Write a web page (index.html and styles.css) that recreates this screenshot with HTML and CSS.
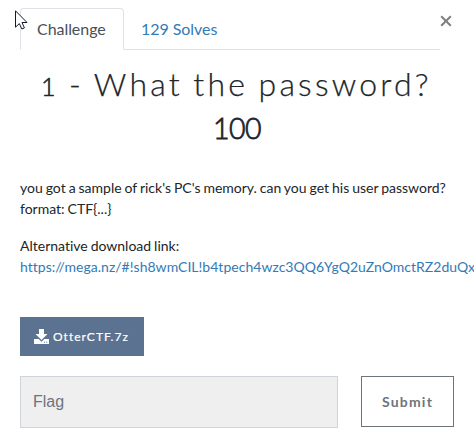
FILE: index.html
```html
<!DOCTYPE html>
<html lang="en">
<head>
<meta charset="utf-8">
<title>Challenge</title>
<link rel="stylesheet" href="styles.css">
</head>
<body>
<main class="modal">
  <button class="close" aria-label="Close"><svg width="12" height="12" viewBox="0 0 12 12"><path d="M1.2 1.2 10.8 10.8M10.8 1.2 1.2 10.8"/></svg></button>
  <nav class="tabs">
    <a class="tab active">Challenge</a>
    <a class="tab">129 Solves</a>
  </nav>
  <h2 class="name"><span class="numeral">1</span> - What the password?</h2>
  <h3 class="value">100</h3>
  <div class="description">
    <p>you got a sample of rick's PC's memory. can you get his user password?<br>format: CTF{...}</p>
    <p>Alternative download link:<br><a class="link">https://mega.nz/#!sh8wmCIL!b4tpech4wzc3QQ6YgQ2uZnOmctRZ2duQx</a></p>
  </div>
  <a class="download">
    <svg width="15" height="15" viewBox="0 0 15 15"><path d="M5 0h5v5h3.5L7.5 11 1.5 5H5z"/><path fill-rule="evenodd" d="M0 10h4.7l2.8 2.7L10.3 10H15v5H0zM10 12.7v1h1v-1zM12.3 12.7v1h1v-1z"/></svg>
    <span>OtterCTF.7z</span>
  </a>
  <div class="answer">
    <input class="flag" type="text" placeholder="Flag">
    <button class="submit">Submit</button>
  </div>
</main>
<svg class="cursor" width="13" height="20" viewBox="0 0 13 20"><path d="M.5.8V17.2L4.3 13.6 6.9 19 9.4 17.9 7 12.5H12z"/></svg>
</body>
</html>
```
FILE: styles.css
```css
* { box-sizing: border-box; }
body {
  margin: 0;
  width: 474px;
  height: 442px;
  overflow: hidden;
  background: #fff;
  color: #212529;
  font: 14px/21px Lato, sans-serif;
  font-variant-ligatures: none;
}
.modal { position: relative; padding: 8px 20px 0; }
.close {
  position: absolute;
  left: 440px;
  top: 15px;
  width: 12px;
  height: 12px;
  padding: 0;
  border: 0;
  background: none;
}
.close svg { display: block; fill: none; stroke: #7f7f7f; stroke-width: 2; }
.tabs {
  display: flex;
  width: 420px;
  height: 42px;
  border-bottom: 1px solid #dee2e6;
}
.tab {
  height: 42px;
  padding: 8px 16px;
  border: 1px solid transparent;
  border-radius: 4px 4px 0 0;
  color: #337ab7;
  font-size: 16px;
  line-height: 24px;
  letter-spacing: -0.05px;
}
.tab.active {
  width: 104px;
  border-color: #dee2e6;
  border-bottom-color: #fff;
  background: #fff;
  color: #495057;
}
.name {
  width: 432px;
  margin: 15px 0 0;
  padding-left: 21px;
  white-space: nowrap;
  font-size: 32px;
  font-weight: 300;
  line-height: 38px;
  letter-spacing: 3.2px;
  word-spacing: -1.5px;
  -webkit-text-stroke: 0.25px #212529;
}
.numeral { font-size: 25px; -webkit-text-stroke-width: 0.6px; }
.value {
  width: 434px;
  margin: 5px 0 0;
  text-align: center;
  font-size: 28.5px;
  font-weight: 300;
  line-height: 36px;
  letter-spacing: -0.6px;
  -webkit-text-stroke: 0.8px #212529;
}
.description { margin-top: 31px; word-spacing: -0.65px; }
.description p { margin: 0 0 16px; white-space: nowrap; }
.link { color: #337ab7; letter-spacing: 0.025px; }
.download {
  display: flex;
  align-items: center;
  gap: 4px;
  width: 124px;
  height: 39px;
  margin-top: 40px;
  padding-left: 14px;
  background: #5b7290;
  color: #fff;
  font-size: 12px;
  letter-spacing: 1px;
  -webkit-text-stroke: 0.2px #fff;
}
.download svg { fill: #fff; margin-top: -1px; }
.answer { display: flex; gap: 23px; margin-top: 20px; }
.flag {
  width: 318px;
  height: 52px;
  padding: 0 12px;
  border: 1px solid #ced4da;
  border-radius: 0;
  background: #efefef;
  font: 16px "Liberation Sans", Arial, sans-serif;
}
.flag::placeholder { color: #6c757d; opacity: 1; }
.submit {
  width: 93px;
  height: 51px;
  padding: 0 0 1px;
  border: 1px solid #6c757d;
  background: #fff;
  color: #6c757d;
  font: bold 14px Lato, sans-serif;
  letter-spacing: 1.2px;
}
.cursor {
  position: absolute;
  left: 15px;
  top: 10px;
  fill: #fff;
  stroke: #15182b;
  stroke-width: 1;
}
```
